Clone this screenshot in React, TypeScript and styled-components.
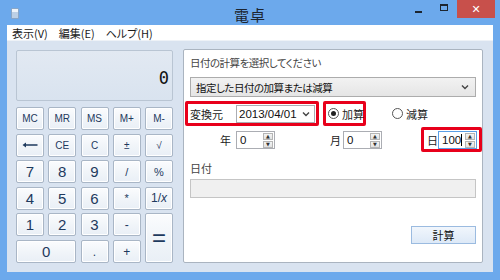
import styled, { createGlobalStyle } from "styled-components";

const GlobalStyle = createGlobalStyle`
    html, body {
        margin: 0;
        padding: 0;
        background: #6aa8ec;
    }
    * {
        box-sizing: border-box;
    }
`;

const jp = `"Noto Sans CJK JP", "Noto Sans", "Liberation Sans", sans-serif`;

const Window = styled.div`
    width: 500px;
    height: 280px;
    background: #6ca9ec;
    display: flex;
    flex-direction: column;
    font-family: ${jp};
    font-feature-settings: "palt";
    overflow: hidden;
`;

const TitleBar = styled.div`
    height: 26px;
    display: flex;
    align-items: flex-start;
    position: relative;
`;

const AppIcon = styled.div`
    margin: 8px 0 0 11px;
    width: 8px;
    height: 11px;
    border-radius: 1px;
    background: linear-gradient(#eef4fa 0 35%, #bcd0e6 35% 100%);
    border: 1px solid #8aa6c6;
`;

const Title = styled.div`
    position: absolute;
    left: 0;
    right: 0;
    top: 4px;
    text-align: center;
    font-size: 15px;
    color: #1c2530;
    letter-spacing: 1px;
`;

const Controls = styled.div`
    margin-left: auto;
    margin-right: 5px;
    display: flex;
    align-items: flex-start;
`;

const CtrlBtn = styled.div<{ $close?: boolean; $w: number }>`
    width: ${(p) => p.$w}px;
    height: 18px;
    display: flex;
    align-items: center;
    justify-content: center;
    background: ${(p) => (p.$close ? "#c8504b" : "transparent")};
    color: ${(p) => (p.$close ? "#ffffff" : "#1c2530")};
    font-family: "DejaVu Sans", sans-serif;
    font-size: 11px;
`;

const MinBar = styled.div`
    width: 7px;
    height: 2px;
    margin-top: 6px;
    background: #1c2530;
`;

const MaxBox = styled.div`
    width: 8px;
    height: 7px;
    margin-top: -4px;
    border: 1px solid #1c2530;
    border-top-width: 2px;
`;

const Body = styled.div`
    flex: 1;
    margin: 0 7px 8px 7px;
    display: flex;
    flex-direction: column;
`;

const MenuBar = styled.div`
    height: 16px;
    background: #ffffff;
    display: flex;
    align-items: center;
    padding-left: 5px;
    gap: 11px;
    font-size: 11px;
    color: #1a1a1a;
    border-bottom: 1px solid #eef2f7;
`;

const Content = styled.div`
    flex: 1;
    background: #d9e3f0;
    padding: 8px 10px 9px 9px;
    display: flex;
    gap: 10px;
`;

const LeftCol = styled.div`
    width: 157px;
    display: flex;
    flex-direction: column;
    gap: 6px;
`;

const Display = styled.div`
    height: 51px;
    margin-top: 1px;
    border: 1px solid #b9c5d3;
    border-radius: 2px;
    background: linear-gradient(#e2e9f2, #d9e3ef);
    display: flex;
    align-items: flex-end;
    justify-content: flex-end;
    padding: 0 3px 12px 0;
    font-family: "DejaVu Sans Mono", monospace;
    font-size: 17px;
    color: #111;
`;

const Keys = styled.div`
    display: grid;
    grid-template-columns: repeat(5, 28px);
    grid-template-rows: repeat(6, 23px);
    column-gap: 4.25px;
    row-gap: 3.6px;
`;

const Key = styled.div<{ $size: number; $span?: boolean; $tall?: boolean }>`
    grid-column: ${(p) => (p.$span ? "span 2" : "auto")};
    grid-row: ${(p) => (p.$tall ? "span 2" : "auto")};
    border: 1px solid #a9b6c6;
    border-radius: 2px;
    background: linear-gradient(#fbfcfe, #f1f5f9 50%, #e9eff6);
    box-shadow: inset 0 0 0 1px #ffffff;
    display: flex;
    align-items: center;
    justify-content: center;
    font-family: "Liberation Sans", "DejaVu Sans", sans-serif;
    font-size: ${(p) => p.$size}px;
    color: #1e3a5e;
`;

const Panel = styled.div`
    width: 300px;
    background: #ffffff;
    border: 1px solid #aab4c0;
    border-radius: 2px;
    display: flex;
    flex-direction: column;
    padding: 0 6px 0 6px;
    font-size: 11px;
    color: #333;
`;

const Heading = styled.div`
    margin-top: 5px;
    height: 16px;
    line-height: 16px;
    font-size: 10.5px;
    letter-spacing: -0.5px;
    color: #444;
`;

const Select = styled.div`
    margin-top: 6px;
    height: 20px;
    border: 1px solid #acacac;
    background: linear-gradient(#f2f2f2, #e5e5e5);
    display: flex;
    align-items: center;
    padding: 0 6px 0 5px;
    color: #111;
    font-size: 10.5px;
    letter-spacing: -0.5px;
    justify-content: space-between;
`;

const Row = styled.div<{ $h: number }>`
    height: ${(p) => p.$h}px;
    display: flex;
    align-items: center;
    white-space: nowrap;
    & > * {
        flex-shrink: 0;
    }
`;

const Highlight = styled.div<{ $w: number; $ml: number }>`
    width: ${(p) => p.$w}px;
    margin-left: ${(p) => p.$ml}px;
    height: 25px;
    border: 3px solid #e8001b;
    border-radius: 2px;
    display: flex;
    align-items: center;
    padding-left: 2px;
    white-space: nowrap;
`;

const DateField = styled.div`
    margin-left: auto;
    margin-right: 1px;
    width: 79px;
    height: 18px;
    border: 1px solid #abadb3;
    display: flex;
    align-items: center;
    justify-content: space-between;
    padding: 0 4px 0 2px;
    font-family: "Liberation Sans", sans-serif;
    font-size: 11.5px;
    color: #111;
`;

const Radio = styled.div<{ $on?: boolean; $ml?: number }>`
    width: 11px;
    height: 11px;
    flex: none;
    border-radius: 50%;
    border: 1px solid #555;
    background: #fff;
    display: flex;
    align-items: center;
    justify-content: center;
    margin-left: ${(p) => p.$ml || 0}px;
    margin-right: 3px;
    &::after {
        content: "";
        width: 5px;
        height: 5px;
        border-radius: 50%;
        background: ${(p) => (p.$on ? "#222" : "transparent")};
    }
`;

const Label = styled.span<{ $ml?: number }>`
    margin-left: ${(p) => p.$ml || 0}px;
    color: #222;
`;

const Spin = styled.div<{ $ml: number; $focus?: boolean }>`
    margin-left: ${(p) => p.$ml}px;
    width: 39px;
    height: 18px;
    flex: none;
    border: 1px solid ${(p) => (p.$focus ? "#5a9fe6" : "#abadb3")};
    display: flex;
    align-items: stretch;
    font-family: "Liberation Sans", sans-serif;
    font-size: 11.5px;
    color: #111;
`;

const SpinText = styled.div`
    flex: 1;
    display: flex;
    align-items: center;
    padding-left: 3px;
`;

const Caret = styled.span`
    width: 1px;
    height: 12px;
    background: #000;
`;

const SpinBtns = styled.div`
    width: 12px;
    display: flex;
    flex-direction: column;
    gap: 1px;
    padding: 1px;
`;

const SpinBtn = styled.div`
    flex: 1;
    border: 1px solid #b5b5b5;
    background: linear-gradient(#f4f4f4, #e2e2e2);
    display: flex;
    align-items: center;
    justify-content: center;
    font-size: 5px;
    line-height: 1;
    color: #333;
    font-family: "DejaVu Sans", sans-serif;
`;

const ResultLabel = styled.div`
    margin-top: 7px;
    height: 16px;
    line-height: 16px;
    color: #444;
`;

const ResultField = styled.div`
    margin-top: 3px;
    height: 19px;
    border: 1px solid #c5c5c5;
    background: #f0f0f0;
`;

const CalcButton = styled.div`
    margin-top: 28px;
    align-self: flex-end;
    width: 65px;
    height: 18px;
    border: 1px solid #9bbbe0;
    background: linear-gradient(#f1f6fc, #dde9f7);
    display: flex;
    align-items: center;
    justify-content: center;
    color: #111;
    font-size: 11px;
`;

const Chevron = () => (
    <svg width="8" height="6" viewBox="0 0 8 6">
        <path d="M1 1.5 L4 4.5 L7 1.5" fill="none" stroke="#444" strokeWidth="1.4" />
    </svg>
);

const BackArrow = () => (
    <svg width="16" height="6" viewBox="0 0 16 6">
        <path d="M0.5 3 L4 0.5 L4 2.2 L15.5 2.2 L15.5 3.8 L4 3.8 L4 5.5 Z" fill="#1e3a5e" />
    </svg>
);

const SpinBox = ({ value, ml, focus }: { value: string; ml: number; focus?: boolean }) => (
    <Spin $ml={ml} $focus={focus}>
        <SpinText>
            {value}
            {focus && <Caret />}
        </SpinText>
        <SpinBtns>
            <SpinBtn>▲</SpinBtn>
            <SpinBtn>▼</SpinBtn>
        </SpinBtns>
    </Spin>
);

type KeyDef = { t: React.ReactNode; s: number; span?: boolean; tall?: boolean };

const keys: KeyDef[] = [
    { t: "MC", s: 10 },
    { t: "MR", s: 10 },
    { t: "MS", s: 10 },
    { t: "M+", s: 10 },
    { t: "M-", s: 10 },
    { t: <BackArrow />, s: 10 },
    { t: "CE", s: 10 },
    { t: "C", s: 10 },
    { t: "±", s: 10 },
    { t: "√", s: 10 },
    { t: "7", s: 15 },
    { t: "8", s: 15 },
    { t: "9", s: 15 },
    { t: "/", s: 11 },
    { t: "%", s: 11 },
    { t: "4", s: 15 },
    { t: "5", s: 15 },
    { t: "6", s: 15 },
    { t: "*", s: 11 },
    { t: <span>1/<em>x</em></span>, s: 12 },
    { t: "1", s: 15 },
    { t: "2", s: 15 },
    { t: "3", s: 15 },
    { t: "-", s: 12 },
    { t: "=", s: 24, tall: true },
    { t: "0", s: 15, span: true },
    { t: ".", s: 12 },
    { t: "+", s: 12 },
];

function App() {
    return (
        <>
            <GlobalStyle />
            <Window>
                <TitleBar>
                    <AppIcon />
                    <Title>電卓</Title>
                    <Controls>
                        <CtrlBtn $w={26}>
                            <MinBar />
                        </CtrlBtn>
                        <CtrlBtn $w={26}>
                            <MaxBox />
                        </CtrlBtn>
                        <CtrlBtn $w={38} $close>
                            ✕
                        </CtrlBtn>
                    </Controls>
                </TitleBar>
                <Body>
                    <MenuBar>
                        <span>表示(V)</span>
                        <span>編集(E)</span>
                        <span>ヘルプ(H)</span>
                    </MenuBar>
                    <Content>
                        <LeftCol>
                            <Display>0</Display>
                            <Keys>
                                {keys.map((k, i) => (
                                    <Key key={i} $size={k.s} $span={k.span} $tall={k.tall}>
                                        {k.t}
                                    </Key>
                                ))}
                            </Keys>
                        </LeftCol>
                        <Panel>
                            <Heading>日付の計算を選択してください</Heading>
                            <Select>
                                <span>指定した日付の加算または減算</span>
                                <Chevron />
                            </Select>
                            <Row $h={25} style={{ marginTop: 4 }}>
                                <Highlight $w={134} $ml={-5}>
                                    <Label>変換元</Label>
                                    <DateField>
                                        <span>2013/04/01</span>
                                        <Chevron />
                                    </DateField>
                                </Highlight>
                                <Highlight $w={43} $ml={4}>
                                    <Radio $on />
                                    <Label>加算</Label>
                                </Highlight>
                                <Radio $ml={26} />
                                <Label>減算</Label>
                            </Row>
                            <Row $h={27}>
                                <Label $ml={30}>年</Label>
                                <SpinBox value="0" ml={5} />
                                <Label $ml={55}>月</Label>
                                <SpinBox value="0" ml={2} />
                                <Highlight $w={61} $ml={39}>
                                    <Label $ml={1}>日</Label>
                                    <SpinBox value="100" ml={0} focus />
                                </Highlight>
                            </Row>
                            <ResultLabel>日付</ResultLabel>
                            <ResultField />
                            <CalcButton>計算</CalcButton>
                        </Panel>
                    </Content>
                </Body>
            </Window>
        </>
    );
}

export default App;
